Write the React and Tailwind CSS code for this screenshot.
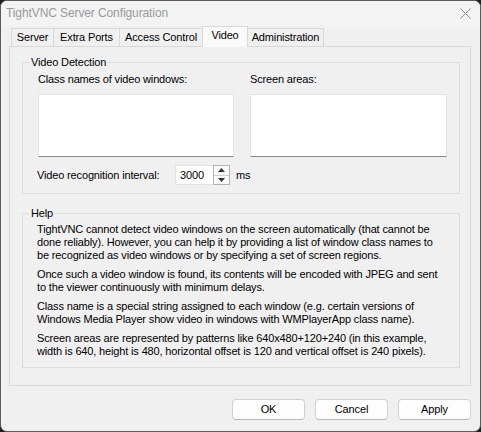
const tabs = [
  { label: "Server", w: "w-[43px]" },
  { label: "Extra Ports", w: "w-[67px]" },
  { label: "Access Control", w: "w-[84px]" },
  { label: "Video", w: "w-[46px]", active: true },
  { label: "Administration", w: "w-[77px]" },
];

const help = [
  [
    "TightVNC cannot detect video windows on the screen automatically (that cannot be",
    "done reliably). However, you can help it by providing a list of window class names to",
    "be recognized as video windows or by specifying a set of screen regions.",
  ],
  [
    "Once such a video window is found, its contents will be encoded with JPEG and sent",
    "to the viewer continuously with minimum delays.",
  ],
  [
    "Class name is a special string assigned to each window (e.g. certain versions of",
    "Windows Media Player show video in windows with WMPlayerApp class name).",
  ],
  [
    "Screen areas are represented by patterns like 640x480+120+240 (in this example,",
    "width is 640, height is 480, horizontal offset is 120 and vertical offset is 240 pixels).",
  ],
];

function Button({ children }) {
  return (
    <button className="w-[73px] h-[21px] rounded-[4px] border border-[#d0d0d0] border-b-[#b8b8b8] bg-[#fdfdfd] text-[11px] leading-none">
      {children}
    </button>
  );
}

// group box: top edge is drawn as two line pieces around the caption
function Group({ label, className = "", bodyClass = "", children }) {
  return (
    <div className={`w-[438px] ${className}`}>
      <div className="flex h-[13px]">
        <div className="w-[7px] h-[7px] self-end border-t border-l border-[#dcdcdc]" />
        <span className="px-[2px]">{label}</span>
        <div className="flex-1 h-[7px] self-end border-t border-r border-[#dcdcdc]" />
      </div>
      <div className={`border-l border-r border-b border-[#dcdcdc] pl-[14px] ${bodyClass}`}>{children}</div>
    </div>
  );
}

export default function App() {
  return (
    <div className="w-[481px] h-[432px] bg-[#1f1f1f] font-['Liberation_Sans',Arial,sans-serif] text-[11px] leading-[13px] tracking-[-0.15px] text-black">
      <div className="h-full rounded-[7px] border border-[#5c5c5c] bg-[#f0f0f0] flex flex-col overflow-hidden">
        {/* Title bar */}
        <div className="h-[25px] flex items-center justify-between pl-[5px] pr-[9px] bg-[#f3f3f3]">
          <span className="text-[12px] text-[#9a9a9a] tracking-[-0.1px]">TightVNC Server Configuration</span>
          <svg width="11" height="11" viewBox="0 0 11 11" className="text-[#8a8a8a]">
            <path d="M0.5 0.5 L10.5 10.5 M10.5 0.5 L0.5 10.5" stroke="currentColor" strokeWidth="1" fill="none" />
          </svg>
        </div>

        {/* Tab control */}
        <div className="ml-[8px] w-[462px]">
          <div className="flex items-end h-[20px] pl-[2px]">
            {tabs.map((t, i) => (
              <div
                key={t.label}
                className={`${t.w} ${i > 0 ? "-ml-px" : ""} flex items-center justify-center border border-b-0 border-[#d9d9d9] ${
                  t.active ? "h-[21px] -mb-px relative z-10 bg-[#f9f9f9] pb-[3px]" : "h-[18px] bg-[#f0f0f0]"
                }`}
              >
                {t.label}
              </div>
            ))}
          </div>

          <div className="h-[340px] border border-[#d9d9d9] bg-[#f0f0f0] pl-[12px] pt-[9px]">
            {/* Video Detection */}
            <Group label="Video Detection" bodyClass="pb-[8px]">
              <div className="grid grid-cols-[196px_197px] gap-x-[16px] pt-[4px] pl-px">
                <div>Class names of video windows:</div>
                <div>Screen areas:</div>
                <div className="mt-[8px] h-[63px] bg-white border border-[#e3e3e3] border-b-[#8a8a8a]" />
                <div className="mt-[8px] h-[63px] bg-white border border-[#e3e3e3] border-b-[#8a8a8a]" />
              </div>
              <div className="flex items-center mt-[8px]">
                <span className="w-[138px]">Video recognition interval:</span>
                <div className="w-[38px] h-[20px] bg-white border border-[#e3e3e3] border-r-0 flex items-center pl-[4px]">
                  3000
                </div>
                <div className="w-[17px] h-[20px] border border-[#b4b4b4] bg-[#fbfbfb] flex flex-col">
                  <div className="flex-1 flex items-center justify-center border-b border-[#d0d0d0]">
                    <svg width="7" height="4" viewBox="0 0 7 4"><path d="M3.5 0 L7 4 L0 4 Z" fill="#333" /></svg>
                  </div>
                  <div className="flex-1 flex items-center justify-center">
                    <svg width="7" height="4" viewBox="0 0 7 4"><path d="M0 0 L7 0 L3.5 4 Z" fill="#333" /></svg>
                  </div>
                </div>
                <span className="ml-[6px]">ms</span>
              </div>
            </Group>

            {/* Help */}
            <Group label="Help" className="mt-[13px]" bodyClass="pt-[3px] pb-[9px]">
              <div className="flex flex-col gap-[6px]">
                {help.map((p, i) => (
                  <p key={i} className="whitespace-nowrap">
                    {p.map((line, j) => (
                      <span key={j} className="block">{line}</span>
                    ))}
                  </p>
                ))}
              </div>
            </Group>
          </div>
        </div>

        {/* Buttons */}
        <div className="flex justify-end gap-[10px] mt-[13px] pr-[9px]">
          <Button>OK</Button>
          <Button>Cancel</Button>
          <Button>Apply</Button>
        </div>
      </div>
    </div>
  );
}
